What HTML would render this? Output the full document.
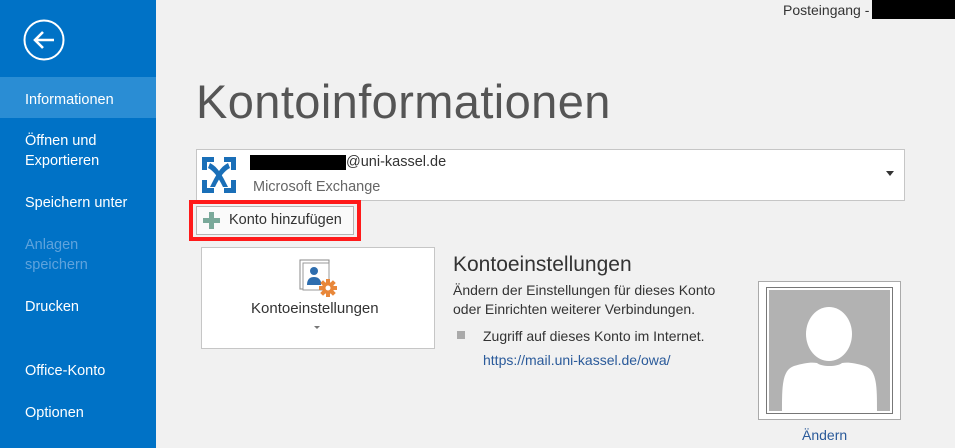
<!DOCTYPE html>
<html><head><meta charset="utf-8"><style>
*{margin:0;padding:0;box-sizing:border-box}
body{width:955px;height:448px;background:#f1f1f1;font-family:"Liberation Sans",sans-serif;position:relative;overflow:hidden;color:#444}
.abs{position:absolute;white-space:nowrap}
#side{position:absolute;left:0;top:0;width:156px;height:448px;background:#0072c6}
.nav{position:absolute;left:25px;color:#fff;font-size:14.5px;line-height:20px}
</style></head><body>
<div id="side">
<svg class="abs" style="left:23px;top:19px" width="42" height="42" viewBox="0 0 42 42"><circle cx="21" cy="21" r="19.5" fill="none" stroke="#fff" stroke-width="2"/><path d="M12 21H31M20 13L12 21L20 29" fill="none" stroke="#fff" stroke-width="2.6"/></svg>
<div class="abs" style="left:0;top:77px;width:156px;height:41px;background:#2a8dd4"></div>
<div class="nav" style="top:90px">Informationen</div>
<div class="nav" style="top:131px">Öffnen und<br>Exportieren</div>
<div class="nav" style="top:193px">Speichern unter</div>
<div class="nav" style="top:235px;color:#5fa3dc">Anlagen<br>speichern</div>
<div class="nav" style="top:297px">Drucken</div>
<div class="nav" style="top:361px">Office-Konto</div>
<div class="nav" style="top:403px">Optionen</div>
</div>
<div class="abs" style="left:783px;top:2px;font-size:14px;color:#333">Posteingang -</div>
<div class="abs" style="left:872px;top:0;width:83px;height:19px;background:#000"></div>
<div class="abs" style="left:196px;top:74px;font-size:47px;color:#555;letter-spacing:0.4px">Kontoinformationen</div>
<div class="abs" style="left:196px;top:149px;width:709px;height:52px;background:#fff;border:1px solid #c6c6c6"></div>
<svg class="abs" style="left:200px;top:155px" width="38" height="40" viewBox="0 0 38 40"><g fill="#1a6fb8"><path d="M2 2h12v5H7v8H2z"/><path d="M36 2H24v5h7v8h5z"/><path d="M2 38h12v-5H7v-8H2z"/><path d="M36 38H24v-5h7v-8h5z"/><path d="M10 8c8 4 12 12 18 24h-5C18 22 14 16 8 13z"/><path d="M28 8c-8 4-12 12-18 24h5c5-10 9-16 15-19z"/></g></svg>
<div class="abs" style="left:250px;top:155px;width:96px;height:15px;background:#000"></div>
<div class="abs" style="left:346px;top:154px;font-size:14.5px;color:#333">@uni-kassel.de</div>
<div class="abs" style="left:253px;top:179px;font-size:14.5px;color:#666">Microsoft Exchange</div>
<div class="abs" style="left:886px;top:171px;width:0;height:0;border-left:4px solid transparent;border-right:4px solid transparent;border-top:5px solid #333"></div>
<div class="abs" style="left:189px;top:200px;width:172px;height:41px;border:4px solid #ff1a1a"></div>
<div class="abs" style="left:196px;top:206px;width:158px;height:29px;border:1px solid #b5b5b5;background:#fafafa"></div>
<svg class="abs" style="left:203px;top:212px" width="17" height="17"><path d="M6 0h5v6h6v5h-6v6H6v-6H0V6h6z" fill="#7aa99a"/></svg>
<div class="abs" style="left:229px;top:212px;font-size:14.5px;color:#333">Konto hinzufügen</div>
<div class="abs" style="left:201px;top:247px;width:234px;height:102px;background:#fff;border:1px solid #c6c6c6"></div>
<svg class="abs" style="left:299px;top:259px" width="40" height="40"><rect x="1" y="1" width="29" height="29" fill="#fff" stroke="#888"/><rect x="4" y="4" width="26" height="27" fill="#fff" stroke="#999"/><circle cx="15" cy="12" r="4" fill="#2e6dae"/><path d="M8 26c0-6 3-8 7-8s6 2 7 5v3z" fill="#2e6dae"/><g fill="#e8873a"><circle cx="29" cy="29" r="6"/><rect x="27" y="20" width="4" height="18"/><rect x="20" y="27" width="18" height="4"/><rect x="27" y="20" width="4" height="18" transform="rotate(45 29 29)"/><rect x="27" y="20" width="4" height="18" transform="rotate(-45 29 29)"/></g><circle cx="29" cy="29" r="2.5" fill="#fff"/></svg>
<div class="abs" style="left:251px;top:300px;font-size:15px;color:#333">Kontoeinstellungen</div>
<div class="abs" style="left:314px;top:326px;border-left:3px solid transparent;border-right:3px solid transparent;border-top:3px solid #777"></div>
<div class="abs" style="left:453px;top:253px;font-size:21px;color:#333">Kontoeinstellungen</div>
<div class="abs" style="left:453px;top:281px;font-size:14px;line-height:19px;color:#333">Ändern der Einstellungen für dieses Konto<br>oder Einrichten weiterer Verbindungen.</div>
<div class="abs" style="left:457px;top:331px;width:8px;height:8px;background:#aaa"></div>
<div class="abs" style="left:483px;top:328px;font-size:14px;color:#333">Zugriff auf dieses Konto im Internet.</div>
<div class="abs" style="left:483px;top:352px;font-size:14px;color:#2a5a9a">https://mail.uni-kassel.de/owa/</div>
<div class="abs" style="left:758px;top:281px;width:143px;height:139px;background:#fff;border:1px solid #aaa"></div>
<div class="abs" style="left:766px;top:287px;width:127px;height:127px;border:1px solid #777;background:#fff"></div>
<svg class="abs" style="left:769px;top:290px" width="121" height="121"><rect width="121" height="121" fill="#b2b2b2"/><ellipse cx="60" cy="44" rx="23" ry="27" fill="#fff"/><path d="M13 121c0-24 0-41 12-45c10-3 17-4 23-3c5 4 20 4 25 0c6-1 13 0 23 3c12 4 12 21 12 45z" fill="#fff"/></svg>
<div class="abs" style="left:802px;top:427px;font-size:14px;color:#2a5a9a">Ändern</div>
</body></html>
